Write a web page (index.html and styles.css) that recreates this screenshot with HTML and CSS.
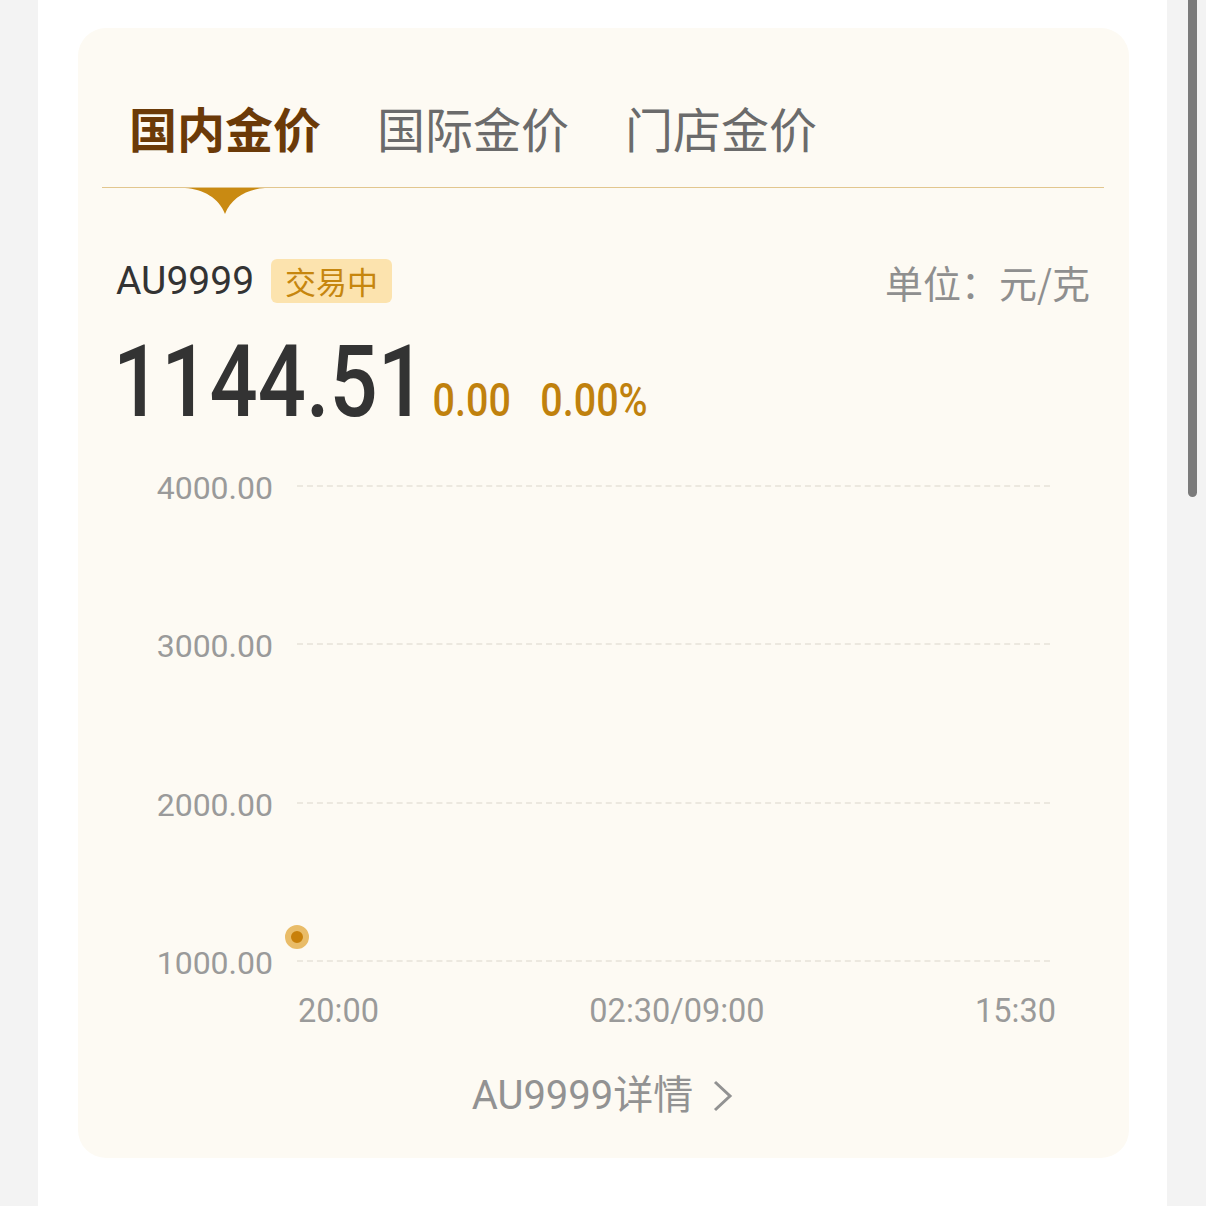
FILE: index.html
```html
<!DOCTYPE html>
<html lang="zh-CN">
<head>
<meta charset="UTF-8">
<title>金价</title>
<link rel="stylesheet" href="styles.css">
</head>
<body>
<div class="page">
<div class="card">
<div class="tabs">
<div class="tab tab-active">国内金价</div>
<div class="tab">国际金价</div>
<div class="tab">门店金价</div>
<svg class="tab-pointer" width="80" height="26" viewBox="0 0 80 26"><path d="M0 0 H80 C62 1 46 10 40 26 C34 10 18 1 0 0 Z" fill="#c98a12"/></svg>
</div>
<div class="quote-head">
<div class="quote-name">
<span class="code">AU9999</span>
<span class="badge">交易中</span>
</div>
<div class="unit">单位：元/克</div>
</div>
<div class="price-row">
<div class="price-line">
<span class="price">1144.51</span>
<span class="change">0.00</span>
<span class="change">0.00%</span>
</div>
</div>
<div class="chart">
<div class="grid-row"><span class="y-label">4000.00</span><span class="grid-line"></span></div>
<div class="grid-row"><span class="y-label">3000.00</span><span class="grid-line"></span></div>
<div class="grid-row"><span class="y-label">2000.00</span><span class="grid-line"></span></div>
<div class="grid-row"><span class="y-label">1000.00</span><span class="grid-line"></span></div>
<div class="plot">
<span class="point" style="bottom: 4.82%"></span>
</div>
</div>
<div class="x-axis">
<span>20:00</span>
<span>02:30/09:00</span>
<span>15:30</span>
</div>
<div class="detail-link">
<span>AU9999详情</span>
<svg width="24" height="34" viewBox="0 0 24 34"><path d="M4 3 L19 17 L4 31" fill="none" stroke="#929292" stroke-width="3"/></svg>
</div>
</div>
</div>
<div class="scrollbar"></div>
</body>
</html>
```
FILE: styles.css
```css
body {
margin: 0;
background: #f3f3f3;
font-family: Roboto, "Noto Sans CJK SC", sans-serif;
}
.page {
width: 1129px;
margin-left: 38px;
min-height: 1206px;
background: #fff;
padding: 28px 0 0 40px;
box-sizing: border-box;
}
.card {
width: 1051px;
background: #fdfaf3;
border-radius: 28px;
padding-bottom: 38px;
}
.tabs {
position: relative;
display: flex;
gap: 56px;
margin: 0 25px 0 24px;
padding: 75px 0 36px 27px;
border-bottom: 1px solid #e2c68e;
}
.tab {
font-family: "Noto Sans CJK SC", sans-serif;
font-size: 48px;
line-height: 48px;
color: #6b6b6b;
}
.tab-active {
color: #6b3a08;
font-weight: 700;
}
.tab-pointer {
position: absolute;
left: 83px;
top: 100%;
margin-top: 1px;
}
.quote-head {
display: flex;
align-items: center;
justify-content: space-between;
margin-top: 71px;
padding: 0 39px 0 38px;
height: 44px;
}
.quote-name {
display: flex;
align-items: center;
gap: 17px;
}
.code {
font-size: 39px;
color: #333;
}
.badge {
font-family: "Noto Sans CJK SC", sans-serif;
font-size: 31px;
line-height: 44px;
padding: 0 14px;
background: #fce3ae;
color: #c6860e;
border-radius: 6px;
}
.unit {
font-family: "Noto Sans CJK SC", sans-serif;
font-size: 38px;
color: #8f8f8f;
}
.price-row {
margin-top: 28px;
padding-left: 35px;
}
/* condensed digits: no narrow face installed, so squeeze Roboto */
.price-line {
display: flex;
align-items: baseline;
gap: 8px;
font-weight: 500;
transform: scaleX(0.84);
transform-origin: left center;
}
.price {
font-size: 101px;
line-height: 1;
color: #333;
}
.change {
font-size: 47px;
color: #c0810d;
}
.change + .change {
margin-left: 27px;
}
.chart {
position: relative;
display: flex;
flex-direction: column;
gap: 118.33px;
margin-top: 36px;
padding-right: 79px;
}
.grid-row {
display: grid;
grid-template-columns: 195px 1fr;
column-gap: 24px;
height: 40px;
}
.y-label {
text-align: right;
font-size: 32px;
line-height: 40px;
color: #9a9a9a;
}
.grid-line {
margin-top: 17px;
height: 0;
border-top: 2px dashed #ece8df;
}
.plot {
position: absolute;
left: 219px;
right: 79px;
top: 17px;
bottom: 23px;
}
.point {
position: absolute;
left: 0;
width: 12px;
height: 12px;
border-radius: 50%;
background: #c8800a;
border: 6px solid #e9bc68;
transform: translate(-50%, 50%);
}
.x-axis {
display: flex;
justify-content: space-between;
margin: 8px 73px 0 220px;
font-size: 32.5px;
line-height: 40px;
color: #9a9a9a;
}
.detail-link {
display: flex;
align-items: center;
justify-content: center;
gap: 18px;
margin-top: 41px;
font-size: 40px;
line-height: 48px;
color: #929292;
}
.scrollbar {
position: fixed;
left: 1188px;
top: 0;
width: 9px;
height: 497px;
background: #7b7b7b;
border-radius: 0 0 5px 5px;
}
```
